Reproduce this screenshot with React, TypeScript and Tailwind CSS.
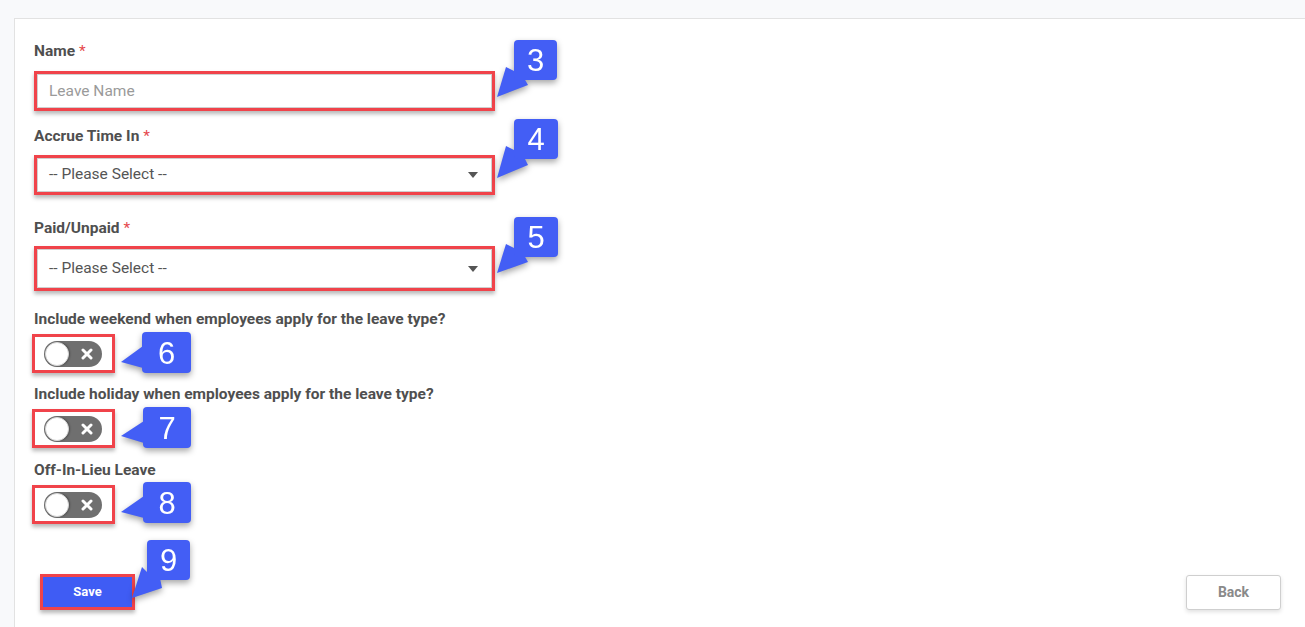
type CalloutProps = {
  n: string;
  left: number;
  top: number;
  w: number;
  h: number;
  tail: string;
};

// annotation bubble that sits over the form
function Callout({ n, left, top, w, h, tail }: CalloutProps) {
  return (
    <div
      className="absolute drop-shadow-[0_3px_3px_rgba(0,0,0,0.35)]"
      style={{ left, top, width: w, height: h }}
    >
      <svg className="absolute left-0 top-0 overflow-visible" width={w} height={h}>
        <polygon points={tail} fill="#435ef5" />
      </svg>
      <div className="relative flex h-full w-full items-center justify-center rounded-[4px] bg-[#435ef5] pt-[1px] font-['Liberation_Sans',Arial,sans-serif] text-[31px] leading-none text-white">
        {n}
      </div>
    </div>
  );
}

function Label({ text, required }: { text: string; required?: boolean }) {
  return (
    <div className="font-['Roboto',sans-serif] text-[15.5px] font-bold leading-[20px] text-[#4f4f4f]">
      {text}
      {required && <span className="ml-1 font-normal text-[#e5484d]">*</span>}
    </div>
  );
}

function Caret() {
  return (
    <svg width="10" height="6" viewBox="0 0 10 6" className="mr-[13px]">
      <path d="M0 0 L10 0 L5 6 Z" fill="#555" />
    </svg>
  );
}

function SelectBox({ h }: { h: string }) {
  return (
    <div className={`${h} w-[461px] border-[3px] border-[#f0434a] shadow-[0_3px_4px_rgba(0,0,0,0.28)]`}>
      <div className="flex h-full w-full items-center justify-between border border-[#cfcfcf] bg-white pl-[11px] font-['Roboto',sans-serif] text-[15.5px] text-[#555]">
        <span>-- Please Select --</span>
        <Caret />
      </div>
    </div>
  );
}

function Toggle() {
  return (
    <div className="ml-[-2px] flex h-[39px] w-[83px] items-center border-[3px] border-[#f0434a] pl-[9px] shadow-[0_3px_4px_rgba(0,0,0,0.28)]">
      <div className="relative flex h-[26px] w-[58px] items-center rounded-full bg-[#6f6f6f]">
        <div className="ml-[1px] h-[24px] w-[24px] rounded-full border border-[#d5d5d5] bg-white shadow-[1px_0_2px_rgba(0,0,0,0.3)]" />
        <svg width="12" height="12" viewBox="0 0 12 12" className="ml-[12px]">
          <path d="M2 2 L10 10 M10 2 L2 10" stroke="white" strokeWidth="3" strokeLinecap="round" />
        </svg>
      </div>
    </div>
  );
}

export default function App() {
  return (
    <div className="relative min-h-screen bg-[#f8f9fb] pt-[18px] font-['Roboto',sans-serif]">
      <div className="ml-[14px] min-h-[609px] border-l border-t border-[#e2e2e2] bg-white pl-[19px] pt-[22px]">
        <div className="flex w-[461px] flex-col">
          <Label text="Name" required />
          <div className="mt-[10px] h-[40px] w-[461px] border-[3px] border-[#f0434a] shadow-[0_3px_4px_rgba(0,0,0,0.28)]">
            <input
              className="h-full w-full border border-[#cfcfcf] bg-white pl-[11px] font-['Roboto',sans-serif] text-[15.5px] text-[#555] outline-none placeholder:text-[#9a9a9a]"
              placeholder="Leave Name"
            />
          </div>

          <div className="mt-[15px]">
            <Label text="Accrue Time In" required />
          </div>
          <div className="mt-[9px]">
            <SelectBox h="h-[40px]" />
          </div>

          <div className="mt-[23px]">
            <Label text="Paid/Unpaid" required />
          </div>
          <div className="mt-[8px]">
            <SelectBox h="h-[45px]" />
          </div>

          <div className="mt-[18px] whitespace-nowrap">
            <Label text="Include weekend when employees apply for the leave type?" />
          </div>
          <div className="mt-[5px]">
            <Toggle />
          </div>

          <div className="mt-[11px] whitespace-nowrap">
            <Label text="Include holiday when employees apply for the leave type?" />
          </div>
          <div className="mt-[5px]">
            <Toggle />
          </div>

          <div className="mt-[12px]">
            <Label text="Off-In-Lieu Leave" />
          </div>
          <div className="mt-[5px]">
            <Toggle />
          </div>
        </div>

        <div className="mt-[50px] flex items-start justify-between pr-[24px]">
          <div className="ml-[6px] h-[36px] w-[95px] border-[3px] border-[#f0434a] shadow-[0_3px_4px_rgba(0,0,0,0.28)]">
            <button className="h-full w-full bg-[#3f5cf4] text-[13px] font-bold text-white">Save</button>
          </div>
          <button className="mt-[1px] h-[35px] w-[95px] rounded-[3px] border border-[#cfcfcf] bg-white text-[14px] font-bold text-[#8a8a8a] shadow-[0_2px_4px_rgba(0,0,0,0.12)]">
            Back
          </button>
        </div>
      </div>

      <Callout n="3" left={514} top={40} w={43} h={40} tail="-8,27 -17,57 14,45 10,38 2,32" />
      <Callout n="4" left={514} top={119} w={44} h={40} tail="-8,27 -17,59 14,46 10,38 2,32" />
      <Callout n="5" left={514} top={217} w={44} h={40} tail="-8,27 -17,56 14,45 10,38 2,32" />
      <Callout n="6" left={142} top={332} w={49} h={41} tail="1,14 -21,30 1,36" />
      <Callout n="7" left={143} top={407} w={48} h={41} tail="1,14 -22,29 1,36" />
      <Callout n="8" left={143} top={482} w={48} h={41} tail="1,14 -22,30 1,36" />
      <Callout n="9" left={147} top={540} w={43} h={40} tail="-5,27 -15,58 15,48 13,38 2,34" />
    </div>
  );
}
